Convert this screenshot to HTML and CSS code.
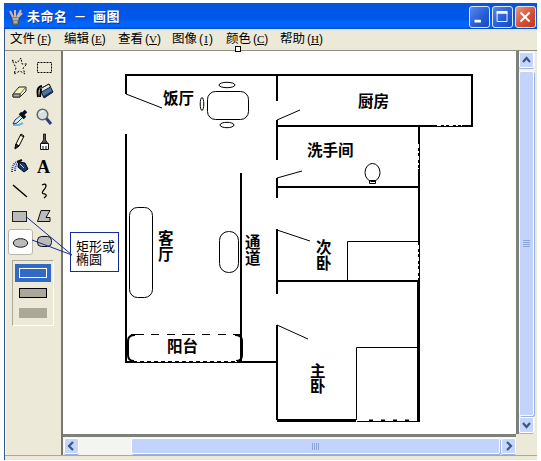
FILE: index.html
```html
<!DOCTYPE html>
<html lang="zh-CN">
<head>
<meta charset="utf-8">
<title>未命名 - 画图</title>
<link rel="stylesheet" href="styles.css">
</head>
<body>
<div class="window">
  <header class="titlebar">
    <svg class="app-icon" width="16" height="18" viewBox="0 0 16 18"><path d="M3 8h9l-2 9H5z" fill="#7b8790" stroke="#484848"/><path d="M5 9L2 3M7 9V2M9 9l4-7M10 9l4-4" stroke="#d7b69b" stroke-width="2"/><path d="M5 11h5M6 14h3" stroke="#d6dce0"/></svg>
    <h1 class="title">未命名 － 画图</h1>
    <div class="controls">
      <svg class="control" width="21" height="22" viewBox="0 0 21 22"><path d="M5 15.500h7" stroke="#fff" stroke-width="3"/></svg>
      <svg class="control" width="21" height="22" viewBox="0 0 21 22"><path d="M4.500 6v10h11V6" fill="none" stroke="#fff"/><path d="M4 6h12" stroke="#fff" stroke-width="3"/></svg>
      <svg class="control close" width="21" height="22" viewBox="0 0 21 22"><path d="M5 6l10 10M15 6L5 16" stroke="#fff" stroke-width="2.200"/></svg>
    </div>
  </header>
  <nav class="menubar">
    <span>文件<b>(<u>F</u>)</b></span><span>编辑<b>(<u>E</u>)</b></span><span>查看<b>(<u>V</u>)</b></span><span>图像<b>(<u>I</u>)</b></span><span class="marked">颜色<b>(<u>C</u>)</b></span><span>帮助<b>(<u>H</u>)</b></span>
  </nav>
  <main class="workspace">
    <aside class="toolbox">
      <div class="tools">
        <svg viewBox="0 0 24 24"><path d="M4 6l5 3 4-5 1 6h5l-4 4 2 6-5-3-6 3 2-6z" fill="none" stroke="#000" stroke-dasharray="2 1.500"/></svg>
        <svg viewBox="0 0 24 24"><rect x="5.500" y="8.500" width="14" height="10" fill="none" stroke="#000" stroke-dasharray="2 1"/></svg>
        <svg viewBox="0 0 24 24"><path d="M5 15l6-7h7v4l-6 6H5z" fill="#f5f2bc" stroke="#222"/><path d="M5 15h7l6-7M12 15v3" fill="none" stroke="#666"/><path d="M5 15h7v3H5z" fill="#aaa" stroke="#333"/></svg>
        <svg viewBox="0 0 24 24"><path d="M8 10l9-5 4 8-9 6z" fill="#47759f" stroke="#111"/><path d="M8 10l9-5 1.500 3-9 5z" fill="#dce9ef" stroke="#222"/><path d="M10 7c-5 1-5 5-4 11M9 10l-1 8" fill="none" stroke="#000" stroke-width="2"/><path d="M12 18l8-5" stroke="#112f58" stroke-width="2"/></svg>
        <svg viewBox="0 0 24 24"><path d="M5 21h6l4-2" stroke="#67b9e5" stroke-width="2" fill="none"/><path d="M5 20l2-4 6-5 2 2-6 6z" fill="#d4f4ff" stroke="#24364c"/><path d="M12 9l5 5M14 11l4-4" stroke="#080d20" stroke-width="3.500"/></svg>
        <svg viewBox="0 0 24 24"><path d="M14 14l5 6" stroke="#253f83" stroke-width="3"/><circle cx="10.500" cy="10.500" r="5.300" fill="#d5e2e5" stroke="#666" stroke-width="1.500"/><path d="M8 9q1-2 4-2" stroke="#fff" fill="none"/></svg>
        <svg viewBox="0 0 24 24"><path d="M8 15l5-10 3 2-5 10-4 3z" fill="#fff8df" stroke="#000"/><path d="M12 6l4 2M7 19l1-4 3 2z" fill="#333" stroke="#000"/></svg>
        <svg viewBox="0 0 24 24"><path d="M11.500 5h2v6l2 3h-6l2-3z" fill="#555" stroke="#222"/><path d="M8.500 14.500h8v6h-8zM11 17v3M14 17v3" fill="#fff" stroke="#111"/></svg>
        <svg viewBox="0 0 24 24"><path d="M4 18q0-10 7-10M7 17q0-7 4-7" fill="none" stroke="#2b3eaa" stroke-width="2" stroke-dasharray="1 1"/><path d="M11 8l6 1 3 6-4 3-6-5z" fill="#153a78" stroke="#000"/><path d="M9 8l5-2" stroke="#111" stroke-width="2"/><path d="M12 10l4 4" stroke="#b5caec"/></svg>
        <svg viewBox="0 0 24 24"><text class="letter" x="5" y="19">A</text></svg>
        <svg viewBox="0 0 24 24"><path d="M5 6l14 12" stroke="#000" stroke-width="1.500"/></svg>
        <svg viewBox="0 0 24 24"><path d="M10 6q4-2 4 1 0 2-3 5-2 3 2 3 3 1-1 4" fill="none" stroke="#000" stroke-width="1.300"/></svg>
        <svg viewBox="0 0 24 24"><rect x="4.500" y="7.500" width="14" height="10" fill="#bbb" stroke="#222"/></svg>
        <svg viewBox="0 0 24 24"><path d="M9 6.500h9l-4 7h4v4H5.500z" fill="#bbb" stroke="#111"/></svg>
        <svg class="selected" viewBox="0 0 24 24"><ellipse cx="12" cy="13" rx="7.500" ry="4.500" fill="#bbb" stroke="#111"/></svg>
        <svg viewBox="0 0 24 24"><rect x="5.500" y="7.500" width="14" height="10" rx="4" fill="#bbb" stroke="#111"/></svg>
      </div>
      <div class="fills"><div class="fill active"><i></i></div><div class="fill outlined"><i></i></div><div class="fill"><i></i></div></div>
    </aside>
    <section class="editor">
      <svg class="canvas" width="453" height="383" viewBox="63 51 453 383">
        <g class="wall">
          <path d="M126 94V75H472V126H277M126 134V362H277M241 173V362M277 75V101M277 120V160M277 178V198M277 229V294M277 325V420M277 187H419M419 126V144M419 144V281M277 281H419"/>
        </g>
        <path class="heavy" d="M418.500 281V422M277 420.500H356"/>
        <path class="nibble" d="M437 125.500H462M418.500 144V169M418.500 245V278" stroke-dasharray="4 3 2 3"/>
        <path class="eraser" d="M357 420H416"/>
        <path class="thin" d="M126 94l36 14M277 120l23-10M277 178l25-7M277 230l33 11M277 325l31 14M357 421.500H418M347.500 281V241.500H418M356.500 420V347.500H417"/>
        <path class="dash" d="M369 420.500H416" stroke-dasharray="4 8"/>
        <g class="thin">
          <rect x="207.500" y="91.500" width="41" height="28" rx="8"/>
          <ellipse cx="227" cy="85" rx="8" ry="2.700"/><ellipse cx="227" cy="125" rx="7" ry="2.700"/><ellipse cx="202" cy="104" rx="1.800" ry="6.500"/>
          <rect x="129.500" y="207.500" width="23" height="90" rx="8"/>
          <rect x="219.500" y="231.500" width="19" height="41" rx="9"/>
          <ellipse cx="372.500" cy="172.500" rx="7.500" ry="9"/><path d="M369.500 180.500h6v3h-6zM371 181.500h4"/>
        </g>
        <path class="balcony" d="M135 335q-7 0-7 6v14q0 6 6 6M235 335q7 0 7 6v14q0 6-6 6"/>
        <path class="thin" d="M131 334.500H240" stroke-dasharray="13 7 8 8 8 7"/>
        <path class="nibble" d="M137 361.500H237" stroke-dasharray="3 4"/>
        <g class="room">
          <text x="163" y="104">饭厅</text><text x="358" y="107">厨房</text><text x="307" y="156">洗手间</text>
          <text><tspan x="158" y="244">客</tspan><tspan x="158" y="260">厅</tspan></text>
          <text><tspan x="245" y="248">通</tspan><tspan x="245" y="264">道</tspan></text>
          <text><tspan x="316" y="253">次</tspan><tspan x="316" y="269">卧</tspan></text>
          <text><tspan x="310" y="377">主</tspan><tspan x="310" y="392">卧</tspan></text>
          <text x="167" y="352">阳台</text>
        </g>
      </svg>
      <div class="vscroll">
        <svg class="button" viewBox="0 0 15 16"><path d="M4 10l3.500-4 3.500 4"/></svg>
        <div class="thumb"><svg width="7" height="9"><path d="M0 1.500h7M0 3.500h7M0 5.500h7M0 7.500h7"/></svg></div>
        <svg class="button" viewBox="0 0 15 16"><path d="M4 6l3.500 4L11 6"/></svg>
      </div>
      <div class="hscroll">
        <svg class="button" viewBox="0 0 15 16"><path d="M9 4L5 8l4 4"/></svg>
        <div class="thumb"><svg width="9" height="7"><path d="M1.500 0v7M3.500 0v7M5.500 0v7M7.500 0v7"/></svg></div>
        <svg class="button" viewBox="0 0 15 16"><path d="M6 4l4 4-4 4"/></svg>
      </div>
      <div class="corner"></div>
    </section>
  </main>
  <div class="callout">矩形或<br>椭圆</div>
  <svg class="callout-lines" width="47" height="40" viewBox="26 216 47 40"><path d="M26.500 217L72 255M32 240L72 255"/></svg>
</div>
</body>
</html>
```
FILE: styles.css
```css
* { box-sizing: border-box; }
body { margin: 0; background: #fff; font-family: "Liberation Sans", "Noto Sans CJK SC", sans-serif; overflow: hidden; }
.window { position: relative; width: 533px; height: 457px; margin: 3px 0 0 4px; background: #ece9d8; border-left: 1px solid #315589; }
.titlebar { height: 26px; margin-left: -1px; padding: 1px 1px 0 4px; display: flex; align-items: center; background: linear-gradient(#0754d9, #0057e8 30%, #0056e8 60%, #0066ff 75%, #0064fa 92%, #0141b8); }
.title { margin: -2px 0 0 3px; font: bold 13px/20px "Noto Sans CJK SC", sans-serif; letter-spacing: .5px; word-spacing: 2.500px; color: #fff; text-shadow: 1px 1px #073b9b; white-space: nowrap; }
.controls { display: flex; gap: 2px; margin-left: auto; }
.control { border: 1px solid #dce8ff; border-radius: 3px; background: linear-gradient(135deg, #5788ef, #245bd4 60%, #174abd); }
.close { background: linear-gradient(135deg, #e5967d, #d85035 55%, #b93820); }
.menubar { height: 22px; border-top: 2px solid #dce7f5; border-bottom: 1px solid #8f8e84; display: flex; padding-left: 5px; font: 12.500px/14px "Noto Sans CJK SC", sans-serif; color: #000; }
.menubar span { width: 54px; flex: none; white-space: nowrap; position: relative; }
.menubar b { display: inline-flex; justify-content: space-between; width: 14px; margin-left: 2px; font: 12px/14px "Liberation Sans", sans-serif; }
.menubar u { font: 11px/14px "Liberation Serif", serif; }
.marked::after { content: ""; position: absolute; left: 9px; top: 15px; width: 4px; height: 4px; border: 1px solid #000; background: #fff; }
.workspace { display: flex; height: 405px; border-bottom: 1px solid #aaa99b; }
.toolbox { width: 58px; flex: none; border-right: 2px solid #77776f; border-left: 1px solid #fff; padding: 3px 0 0 2px; }
.tools { display: grid; grid-template-columns: repeat(2, 24px); grid-auto-rows: 25px; }
.tools svg { width: 24px; height: 24px; }
.tools .selected { width: 25px; height: 26px; background: #fff; border: 1px solid #b9b7aa; border-radius: 3px; }
.letter { font: bold 18px "Liberation Serif", serif; }
.fills { width: 42px; height: 66px; margin: 6px 0 0 4px; padding: 3px 2px; border: 1px solid; border-color: #aaa99b #fff #fff #aaa99b; }
.fill { height: 20px; padding: 4px; width: 36px; }
.fill i { display: block; height: 10px; background: #aca899; }
.active { height: 18px; margin-bottom: 2px; background: #316ac5; }
.active i { border: 1px solid #fff; background: none; }
.outlined i { border: 1px solid #000; }
.editor { display: grid; grid-template-columns: 453px 19px; grid-template-rows: 383px 21px; }
.canvas { display: block; background: #fff; }
.wall { fill: none; stroke: #000; stroke-width: 2; }
.heavy { fill: none; stroke: #000; stroke-width: 3; }
.thin { fill: none; stroke: #000; stroke-width: 1; }
.eraser { stroke: #fff; stroke-width: 4; }
.dash { fill: none; stroke: #000; stroke-width: 2; }
.nibble { fill: none; stroke: #fff; stroke-width: 1; }
.balcony { fill: none; stroke: #000; stroke-width: 2; }
.room { font: bold 15.500px "Noto Sans CJK SC", sans-serif; }
.vscroll { border-left: 3px solid #7d817b; background: #f4f4f0; display: flex; flex-direction: column; padding: 1px 0; width: 19px; }
.hscroll { border-top: 3px solid #7d817b; background: #f4f4f0; display: flex; padding: 1px 0 0 1px; }
.button { display: block; width: 15px; height: 16px; flex: none; border-radius: 2px; background: #c5d5fc; box-shadow: 0 0 0 1px #fff inset, 0 1px #9bb2dc; }
.button path { fill: none; stroke: #39578b; stroke-width: 2.200; }
.thumb { display: flex; align-items: center; justify-content: center; background: #c3d3fd; border: 1px solid #fff; border-radius: 2px; box-shadow: 1px 1px #9bb2dc; }
.thumb path { stroke: #8da6d8; }
.vscroll .thumb { width: 15px; flex: 1; margin: 3px 0 1px; }
.hscroll .thumb { height: 16px; flex: 1; margin: 0 1px 0 52px; }
.corner { background: #ece9d8; }
.callout-lines { position: absolute; left: 21px; top: 213px; pointer-events: none; }
.callout-lines path { stroke: #172b91; fill: none; }
.callout { position: absolute; left: 65px; top: 229px; width: 49px; height: 40px; padding: 6px 0 0 5px; border: 1px solid #172b91; background: #fff; font: 13px/13px "Noto Sans CJK SC", sans-serif; white-space: nowrap; }
```
